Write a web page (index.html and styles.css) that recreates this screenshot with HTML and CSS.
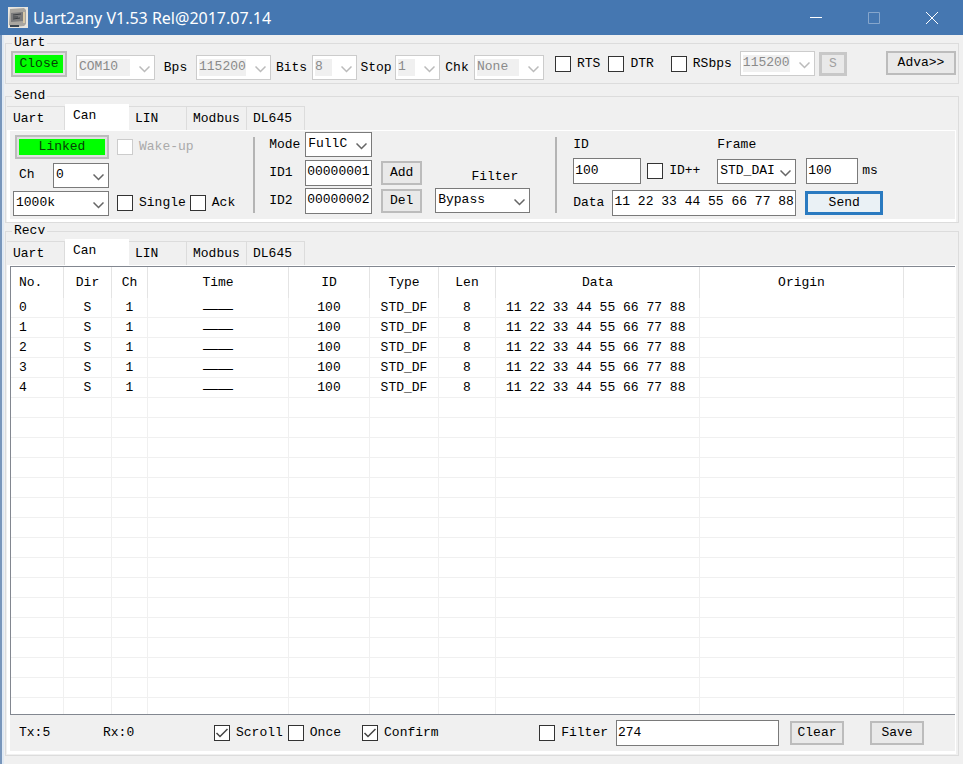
FILE: index.html
```html
<!DOCTYPE html>
<html lang="en">
  <head>
    <meta charset="UTF-8" />
    <meta name="viewport" content="width=device-width, initial-scale=1.0" />
    <title>Uart2any V1.53 Rel@2017.07.14</title>
    <link rel="stylesheet" href="styles.css">
  </head>
  <body>
    <header class="titlebar">
      <svg class="app-icon" viewBox="0 0 20 21" aria-hidden="true">
        <rect width="20" height="21" fill="#e9e6df" />
        <path d="M2 2L16 1L18 3V17L16 19L5 20L1 18Z" fill="#a9a6a0" />
        <path d="M3 6L15 5V14L3 15Z" fill="#7b7b7c" />
        <path d="M5 8L13 7M5 10L10 10M5 12L12 11" stroke="#3d4044" fill="none" />
        <path d="M2 18H11V20H2Z" fill="#3c4650" />
        <path d="M16 5V16" stroke="#d8c9a8" stroke-width="2" />
      </svg>
      <h1>Uart2any V1.53 Rel@2017.07.14</h1>
      <div class="window-buttons">
        <button aria-label="Minimize">
          <svg viewBox="0 0 12 12"><path d="M0 5.5H12" /></svg>
        </button>
        <button aria-label="Maximize" disabled>
          <svg viewBox="0 0 12 12"><path d="M.5 .5H11.5V11.5H.5Z" /></svg>
        </button>
        <button aria-label="Close window">
          <svg viewBox="0 0 12 12"><path d="M0 0L12 12M12 0L0 12" /></svg>
        </button>
      </div>
    </header>

    <main class="window">
      <fieldset class="group">
        <legend>Uart</legend>
        <div class="uart-row">
          <button class="btn btn-green">Close</button>
          <div class="port">
            <select aria-label="Port" disabled><option>COM10</option></select>
            <label for="bps">Bps</label>
            <select id="bps" disabled><option>115200</option></select>
            <label for="bits">Bits</label>
            <select id="bits" disabled><option>8</option></select>
            <label for="stop">Stop</label>
            <select id="stop" disabled><option>1</option></select>
            <label for="chk">Chk</label>
            <select id="chk" disabled><option>None</option></select>
          </div>
          <div class="lines">
            <label class="check"><input type="checkbox" />RTS</label>
            <label class="check"><input type="checkbox" />DTR</label>
            <label class="check check-rsbps"><input type="checkbox" />RSbps</label>
            <select class="rs-rate" aria-label="RS rate" disabled><option>115200</option></select>
            <button class="btn btn-s" disabled>S</button>
          </div>
          <button class="btn btn-adva">Adva&gt;&gt;</button>
        </div>
      </fieldset>

      <fieldset class="group group-send">
        <legend>Send</legend>
        <nav class="tabs">
          <button>Uart</button>
          <button class="active">Can</button>
          <button>LIN</button>
          <button>Modbus</button>
          <button>DL645</button>
        </nav>
        <div class="panel send-panel">
          <div class="link">
            <button class="btn btn-green btn-linked">Linked</button>
            <label class="ch-label" for="ch">Ch</label>
            <select id="ch"><option>0</option></select>
            <div class="checks">
              <label class="check disabled"><input type="checkbox" disabled />Wake-up</label>
            </div>
            <select class="rate" aria-label="Rate"><option>1000k</option></select>
            <div class="checks">
              <label class="check"><input type="checkbox" />Single</label>
              <label class="check"><input type="checkbox" />Ack</label>
            </div>
          </div>

          <div class="divider"></div>

          <div class="filters">
            <label for="mode">Mode</label>
            <select id="mode"><option>FullC</option></select>
            <label class="row2" for="id1">ID1</label>
            <input class="row2" type="text" id="id1" value="00000001" />
            <button class="btn row2">Add</button>
            <label class="filter-label row2" for="filter">Filter</label>
            <label class="row3" for="id2">ID2</label>
            <input class="row3" type="text" id="id2" value="00000002" />
            <button class="btn row3">Del</button>
            <select class="row3" id="filter"><option>Bypass</option></select>
          </div>

          <div class="divider"></div>

          <div class="frame">
            <label for="frame-id">ID</label>
            <label class="frame-label" for="frame-type">Frame</label>
            <input class="frame-id" type="text" id="frame-id" value="100" />
            <label class="check id-inc"><input type="checkbox" />ID++</label>
            <select id="frame-type"><option>STD_DAI</option></select>
            <label class="interval"><input type="text" value="100" />ms</label>
            <label class="data">Data<input type="text" value="11 22 33 44 55 66 77 88" /></label>
            <button class="btn btn-send">Send</button>
          </div>
        </div>
      </fieldset>

      <fieldset class="group group-recv">
        <legend>Recv</legend>
        <nav class="tabs">
          <button>Uart</button>
          <button class="active">Can</button>
          <button>LIN</button>
          <button>Modbus</button>
          <button>DL645</button>
        </nav>
        <div class="panel">
          <div class="list">
            <table>
              <colgroup>
                <col class="c-no" />
                <col class="c-dir" />
                <col class="c-ch" />
                <col class="c-time" />
                <col class="c-id" />
                <col class="c-type" />
                <col class="c-len" />
                <col class="c-data" />
                <col class="c-origin" />
                <col />
              </colgroup>
              <thead>
                <tr>
                  <th>No.</th>
                  <th>Dir</th>
                  <th>Ch</th>
                  <th>Time</th>
                  <th>ID</th>
                  <th>Type</th>
                  <th>Len</th>
                  <th>Data</th>
                  <th>Origin</th>
                  <th></th>
                </tr>
              </thead>
              <tbody>
                <tr><td>0</td><td>S</td><td>1</td><td class="time">——</td><td>100</td><td>STD_DF</td><td>8</td><td class="bytes">11 22 33 44 55 66 77 88</td><td></td><td></td></tr>
                <tr><td>1</td><td>S</td><td>1</td><td class="time">——</td><td>100</td><td>STD_DF</td><td>8</td><td class="bytes">11 22 33 44 55 66 77 88</td><td></td><td></td></tr>
                <tr><td>2</td><td>S</td><td>1</td><td class="time">——</td><td>100</td><td>STD_DF</td><td>8</td><td class="bytes">11 22 33 44 55 66 77 88</td><td></td><td></td></tr>
                <tr><td>3</td><td>S</td><td>1</td><td class="time">——</td><td>100</td><td>STD_DF</td><td>8</td><td class="bytes">11 22 33 44 55 66 77 88</td><td></td><td></td></tr>
                <tr><td>4</td><td>S</td><td>1</td><td class="time">——</td><td>100</td><td>STD_DF</td><td>8</td><td class="bytes">11 22 33 44 55 66 77 88</td><td></td><td></td></tr>
                <tr class="filler"><td></td><td></td><td></td><td></td><td></td><td></td><td></td><td></td><td></td><td></td></tr>
              </tbody>
            </table>
          </div>
          <div class="status">
            <span class="count">Tx:5</span>
            <span class="count count-rx">Rx:0</span>
            <label class="check"><input type="checkbox" checked />Scroll</label>
            <label class="check"><input type="checkbox" />Once</label>
            <label class="check check-confirm"><input type="checkbox" checked />Confirm</label>
            <div class="search">
              <label class="check"><input type="checkbox" />Filter</label>
              <input type="text" aria-label="Filter text" value="274" />
              <button class="btn">Clear</button>
              <button class="btn btn-save">Save</button>
            </div>
          </div>
        </div>
      </fieldset>
    </main>
  </body>
</html>
```
FILE: styles.css
```css
:root {
  --blue: #4577b1;
  --face: #f0f0f0;
  --line: #dcdcdc;
  --grid: #f0f0f0;
  --edge: #7a7a7a;
  --muted: #8a8a8a;
}

* {
  box-sizing: border-box;
  margin: 0;
  padding: 0;
}

body {
  display: flex;
  flex-direction: column;
  min-height: 100vh;
  background: var(--face);
  color: #000;
}

body,
button,
input,
select {
  font-family: "Liberation Mono", monospace;
  font-size: 13px;
  line-height: 16px;
}

/* title bar */
.titlebar {
  display: flex;
  align-items: center;
  height: 35px;
  padding-left: 8px;
  background: var(--blue);
  color: #fff;
}

.app-icon {
  width: 20px;
  height: 21px;
  margin-right: 5px;
}

.titlebar h1 {
  font: 400 16px/24px "Noto Sans", sans-serif;
}

.window-buttons {
  display: flex;
  margin-left: auto;
  padding-right: 2px;
}

.window-buttons button {
  width: 58px;
  height: 35px;
  border: none;
  background: none;
}

.window-buttons svg {
  display: block;
  width: 12px;
  height: 12px;
  margin: 0 auto;
  fill: none;
  stroke: #fff;
}

.window-buttons button:disabled {
  opacity: 0.35;
}

/* groups */
.window {
  flex: 1;
  padding: 0 4px 9px 3px;
  border-left: 2px solid #7896bb;
  box-shadow: inset 2px 0 #dfe9f4;
}

.group {
  min-width: 0;
  padding: 0 2px 0 1px;
  border: 1px solid var(--line);
}

.group legend {
  margin-left: 5px;
  padding: 0 2px;
}

.group-send {
  margin-top: 4px;
}

.group-recv {
  padding-bottom: 1px;
}

/* controls */
.btn {
  height: 24px;
  border: 2px solid #bcbcbc;
  background: #e9e9e9;
  color: #000;
  text-align: center;
}

.btn:disabled {
  border: 3px solid #c8c8c8;
  color: #a0a0a0;
}

.btn-green {
  width: 56px;
  height: 26px;
  background: #00ff00;
  color: #064006;
  box-shadow: inset 0 0 0 2px #e0e0e0;
}

select,
input[type="text"] {
  min-width: 0;
  height: 25px;
  padding: 0 1px;
  border: 1px solid var(--edge);
  border-radius: 0;
  background: #fff;
  color: #000;
}

input[type="text"] {
  height: 26px;
  padding-bottom: 2px;
}

select {
  appearance: none;
  padding: 0 2px 1px;
  background: #fff url("data:image/svg+xml,%3Csvg xmlns='http://www.w3.org/2000/svg' width='11' height='7'%3E%3Cpath d='M.5 .5L5.5 5.5L10.5 .5' fill='none' stroke='%23666' stroke-width='1.5'/%3E%3C/svg%3E") no-repeat right 4px top 10px;
}

select:disabled {
  border-color: #ccc;
  color: var(--muted);
  opacity: 1;
  background:
    url("data:image/svg+xml,%3Csvg xmlns='http://www.w3.org/2000/svg' width='11' height='7'%3E%3Cpath d='M.5 .5L5.5 5.5L10.5 .5' fill='none' stroke='%23bbb' stroke-width='1.5'/%3E%3C/svg%3E") no-repeat right 4px top 10px,
    linear-gradient(#f0f0f0, #f0f0f0) no-repeat 2px 3px / calc(100% - 26px) 17px,
    #fff;
}

.check {
  display: flex;
  align-items: center;
  gap: 6px;
  white-space: nowrap;
}

.check input {
  appearance: none;
  width: 16px;
  height: 16px;
  border: 1px solid #333;
  background: #fff;
}

.check input:checked {
  background: #fff url("data:image/svg+xml,%3Csvg xmlns='http://www.w3.org/2000/svg' width='14' height='14'%3E%3Cpath d='M1.5 7L5 10.5L12.5 3' fill='none' stroke='%23444' stroke-width='1.5'/%3E%3C/svg%3E") center no-repeat;
}

.check.disabled {
  color: #aaa;
}

.check input:disabled {
  border-color: #ccc;
}

/* uart row */
.uart-row {
  display: flex;
  align-items: flex-start;
  padding: 0 0 3px 4px;
}

.port {
  display: grid;
  grid-template-columns: 79px 41px 75px 41px 45px 38px 45px 34px 70px;
  align-items: center;
  margin: 4px 11px 0 9px;
}

.port label {
  text-align: center;
}

.lines {
  display: flex;
  align-items: center;
  gap: 8px;
}

.check-rsbps {
  margin-left: 9px;
}

.rs-rate {
  width: 75px;
}

.btn-s {
  width: 28px;
  margin-left: -4px;
}

.btn-adva {
  width: 70px;
  margin-left: auto;
}

/* tabs */
.tabs {
  display: flex;
  align-items: flex-end;
  height: 26px;
}

.tabs button {
  width: 58px;
  height: 24px;
  padding-left: 6px;
  border: 1px solid var(--line);
  border-left: none;
  border-bottom: none;
  background: var(--face);
  color: #000;
  text-align: left;
}

.tabs button:nth-child(4) {
  width: 60px;
}

.tabs .active {
  width: 64px;
  height: 26px;
  padding: 0 0 2px 8px;
  border: none;
  background: #fff;
}

.panel {
  border: solid #fff;
  border-width: 1px 1px 3px 3px;
}

/* send panel */
.send-panel {
  display: flex;
}

.divider {
  width: 2px;
  height: 76px;
  margin-top: 6px;
  background: #b4b4b4;
}

.link {
  display: grid;
  grid-template-columns: 40px 56px auto;
  grid-template-rows: repeat(3, 24px);
  row-gap: 4px;
  align-items: center;
  padding: 4px 18px 4px 3px;
}

.link .btn-linked {
  grid-column: 1 / 3;
  width: 94px;
  height: 24px;
  margin-left: 2px;
}

.ch-label {
  grid-row: 2;
  grid-column: 1;
  padding-left: 6px;
}

#ch {
  grid-row: 2;
  grid-column: 2;
}

.rate {
  grid-column: 1 / 3;
}

.checks {
  grid-column: 3;
  display: flex;
  gap: 4px;
  padding-left: 8px;
}

.filters {
  display: grid;
  grid-template-columns: 36px 67px 50px 108px;
  grid-template-rows: repeat(3, 25px);
  row-gap: 3px;
  align-items: center;
  align-content: start;
  padding: 1px 25px 0 14px;
}

.filters .row2 {
  grid-row: 2;
}

.filters .row3 {
  grid-row: 3;
}

.filters .btn {
  margin-left: 9px;
}

.filters #filter {
  margin-left: 13px;
}

.filters .filter-label {
  padding: 8px 12px 0 0;
  text-align: right;
}

.frame {
  display: grid;
  grid-template-columns: 68px 76px 79px 87px;
  grid-template-rows: 16px 28px 27px;
  row-gap: 4px;
  align-items: center;
  align-content: start;
  padding: 6px 0 0 16px;
}

.frame .frame-label {
  grid-column: 3 / 5;
}

.id-inc {
  padding-left: 6px;
}

.interval {
  display: flex;
  align-items: center;
  gap: 4px;
  padding-left: 10px;
}

.interval input {
  width: 52px;
}

.data {
  grid-column: 1 / 4;
  display: flex;
  align-items: center;
  gap: 8px;
}

.data input {
  flex: 1;
}

.btn-send {
  margin-left: 9px;
  border: 3px solid #2a7ac0;
  background: #eaf1f5;
}

/* received frames */
.list {
  border: 1px solid #828790;
  border-right: none;
  background: #fff;
}

table {
  width: 100%;
  table-layout: fixed;
  border-collapse: separate;
  border-spacing: 0;
}

.c-no { width: 53px; }
.c-dir { width: 48px; }
.c-ch { width: 36px; }
.c-time { width: 141px; }
.c-id { width: 81px; }
.c-type { width: 69px; }
.c-len { width: 57px; }
.c-data,
.c-origin { width: 204px; }

th {
  height: 31px;
  border-right: 1px solid #e4e4e4;
  font-weight: 400;
}

td {
  height: 20px;
  border-right: 1px solid var(--grid);
  border-bottom: 1px solid var(--grid);
  line-height: 19px;
  text-align: center;
}

th:first-child,
td:first-child {
  padding-left: 8px;
  text-align: left;
}

th:last-child,
td:last-child {
  border-right: none;
}

td.bytes {
  padding-left: 10px;
  text-align: left;
  white-space: nowrap;
}

td.time {
  font-family: "Liberation Sans", sans-serif;
  font-size: 15px;
}

/* the empty part of the list still shows row lines */
.filler td {
  height: 316px;
  border-bottom: none;
  background: repeating-linear-gradient(transparent 0 19px, var(--grid) 19px 20px);
}

.status {
  display: flex;
  align-items: center;
  gap: 5px;
  height: 36px;
  padding: 0 31px 0 9px;
}

.count {
  width: 79px;
}

.count-rx {
  width: 106px;
}

.check-confirm {
  margin-left: 16px;
}

.search {
  display: flex;
  align-items: center;
  gap: 8px;
  margin-left: auto;
}

.search input[type="text"] {
  width: 163px;
}

.search .btn {
  width: 54px;
  margin-left: 3px;
}

.search .btn-save {
  margin-left: 18px;
}
```
